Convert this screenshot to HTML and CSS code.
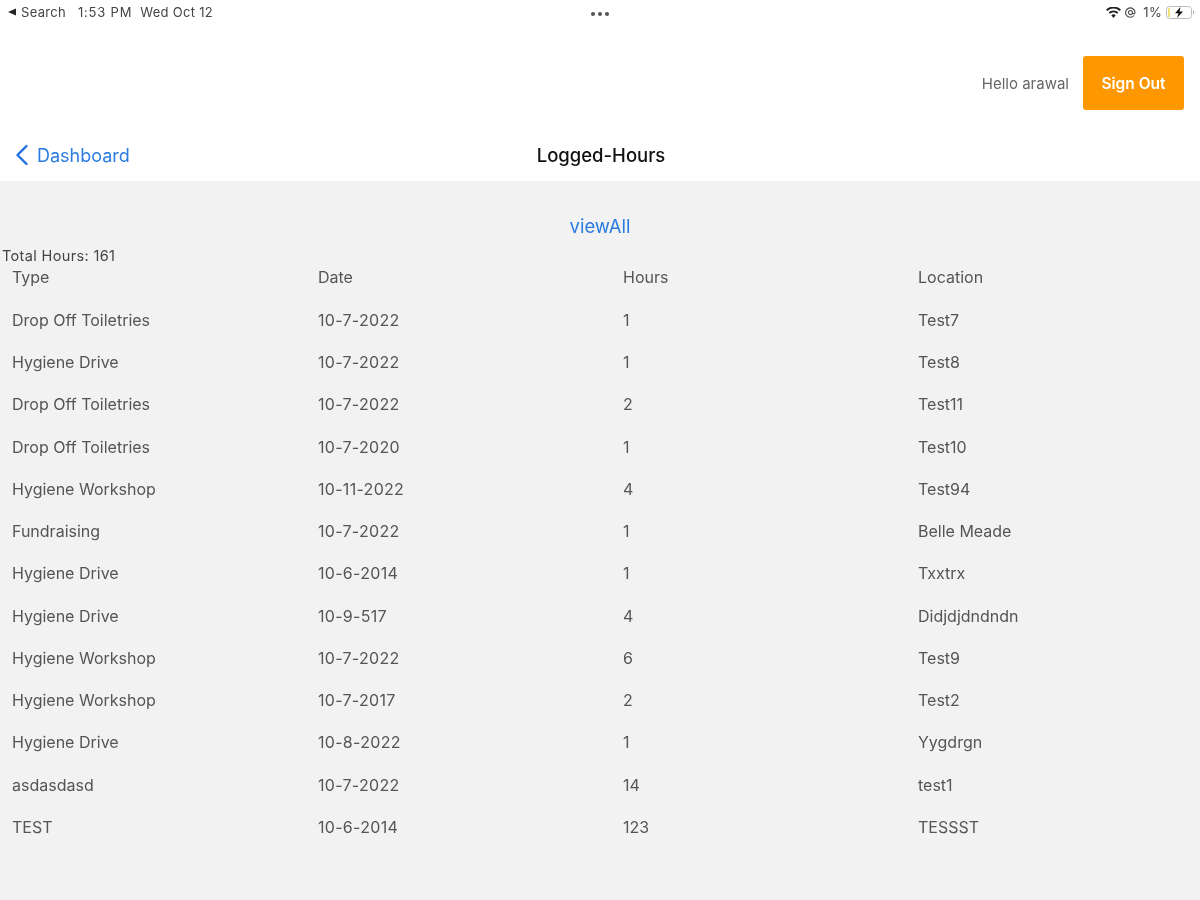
FILE: index.html
```html
<!DOCTYPE html>
<html lang="en">
<head>
<meta charset="utf-8">
<title>Logged-Hours</title>
<link rel="stylesheet" href="styles.css">
</head>
<body>
<div class="status-bar">
  <div class="status-left">
    <span class="back-app"><svg class="back-tri" width="8" height="8" viewBox="0 0 8 8"><path d="M0 4 8 0.5V7.5Z"/></svg>Search</span>
    <span class="clock">1:53 PM</span>
    <span class="date">Wed Oct 12</span>
  </div>
  <div class="dots"><i></i><i></i><i></i></div>
  <div class="status-right">
    <svg class="wifi" width="15" height="11" viewBox="0 0 15 11"><path d="M7.5 11 5.3 8.2a3.4 3.4 0 0 1 4.4 0ZM3.9 6.7l-1.300-1.500a7.600 7.600 0 0 1 9.800 0l-1.300 1.500a5.600 5.600 0 0 0-7.200 0ZM1.400 3.900 0 2.400a11.300 11.300 0 0 1 15 0l-1.400 1.500a9.200 9.200 0 0 0-12.200 0Z"/></svg>
    <svg width="11" height="11" viewBox="0 0 11 11" fill="none" stroke="#444" stroke-width="1.100"><path d="M9 8.500A4.700 4.700 0 1 1 10 5.500C10 7.500 7.500 7.500 7.500 5.500A2 2 0 1 0 7.500 5.600"/></svg>
    <span class="pct">1%</span>
    <svg width="30" height="13" viewBox="0 0 30 13"><rect x="0.500" y="0.500" width="25" height="12" rx="3" fill="none" stroke="#bbb"/><rect x="2" y="2" width="2" height="9" fill="#f3e27a"/><path d="M27 4.500c1.500.3 1.500 3.700 0 4Z" fill="#aaa"/><path d="M14.500 1 9 7.300h3.500L11 12l6-6.500h-3.500Z" fill="#111"/></svg>
  </div>
</div>

<header class="account-row">
  <span class="hello">Hello arawal</span>
  <button class="sign-out">Sign Out</button>
</header>

<nav class="nav-row">
  <a class="back-link">
    <svg width="14" height="22" viewBox="0 0 14 22" fill="none" stroke="#1f6fe0" stroke-width="2.400" stroke-linecap="round" stroke-linejoin="round"><path d="M11.500 2 2.500 11l9 9"/></svg>
    Dashboard
  </a>
  <h1 class="title">Logged-Hours</h1>
</nav>

<main class="content">
  <a class="view-all">viewAll</a>
  <div class="total">Total Hours: 161</div>
  <div class="table-head">
    <span>Type</span><span>Date</span><span>Hours</span><span>Location</span>
  </div>
  <div class="table-row"><span>Drop Off Toiletries</span><span>10-7-2022</span><span>1</span><span>Test7</span></div>
  <div class="table-row"><span>Hygiene Drive</span><span>10-7-2022</span><span>1</span><span>Test8</span></div>
  <div class="table-row"><span>Drop Off Toiletries</span><span>10-7-2022</span><span>2</span><span>Test11</span></div>
  <div class="table-row"><span>Drop Off Toiletries</span><span>10-7-2020</span><span>1</span><span>Test10</span></div>
  <div class="table-row"><span>Hygiene Workshop</span><span>10-11-2022</span><span>4</span><span>Test94</span></div>
  <div class="table-row"><span>Fundraising</span><span>10-7-2022</span><span>1</span><span>Belle Meade</span></div>
  <div class="table-row"><span>Hygiene Drive</span><span>10-6-2014</span><span>1</span><span>Txxtrx</span></div>
  <div class="table-row"><span>Hygiene Drive</span><span>10-9-517</span><span>4</span><span>Didjdjdndndn</span></div>
  <div class="table-row"><span>Hygiene Workshop</span><span>10-7-2022</span><span>6</span><span>Test9</span></div>
  <div class="table-row"><span>Hygiene Workshop</span><span>10-7-2017</span><span>2</span><span>Test2</span></div>
  <div class="table-row"><span>Hygiene Drive</span><span>10-8-2022</span><span>1</span><span>Yygdrgn</span></div>
  <div class="table-row"><span>asdasdasd</span><span>10-7-2022</span><span>14</span><span>test1</span></div>
  <div class="table-row"><span>TEST</span><span>10-6-2014</span><span>123</span><span>TESSST</span></div>
</main>
</body>
</html>
```
FILE: styles.css
```css
* { box-sizing: border-box; }
html, body { height: 100%; }
body {
  margin: 0;
  height: 900px;
  overflow: hidden;
  display: flex;
  flex-direction: column;
  background: #fff;
  color: #444;
  font-family: Inter, "Liberation Sans", sans-serif;
  font-size: 15px;
}
body > * { filter: blur(0.45px); }
.status-bar {
  height: 28px;
  padding: 0 4px 4px 4px;
  display: grid;
  grid-template-columns: 1fr auto 1fr;
  align-items: center;
  font-size: 13px;
  letter-spacing: 0.3px;
  color: #444;
}
.status-left { display: flex; padding-left: 4px; }
.back-app { display: flex; align-items: center; gap: 5px; }
.clock { margin-left: 12px; letter-spacing: 0.8px; }
.date { margin-left: 8px; }
.back-tri { fill: #222; }
.dots { display: flex; gap: 3px; padding-top: 4px; }
.dots i { width: 4px; height: 4px; border-radius: 50%; background: #555; }
.status-right { display: flex; justify-content: flex-end; align-items: center; gap: 4px; }
.wifi { fill: #222; }
.pct { margin-left: 3px; }
.account-row {
  height: 100px;
  padding: 28px 16px 18px 0;
  display: flex;
  justify-content: flex-end;
  align-items: center;
  gap: 14px;
}
.hello { font-size: 15px; color: #666; }
.sign-out {
  width: 101px;
  height: 54px;
  border: 0;
  border-radius: 3px;
  background: #ff9800;
  color: #fff;
  font: 600 15.500px Inter, "Liberation Sans", sans-serif;
}
.nav-row {
  height: 53px;
  position: relative;
  display: flex;
  align-items: center;
  justify-content: center;
  padding-left: 2px;
}
.back-link {
  position: absolute;
  left: 15px;
  top: 16px;
  display: flex;
  align-items: center;
  gap: 8px;
  color: #2b7be0;
  font-size: 18px;
}
.title { margin: 0; font-size: 18.500px; font-weight: 500; color: #111; }
.content {
  flex: 1;
  background: #f2f2f2;
  display: flex;
  flex-direction: column;
  padding-top: 33px;
}
.view-all { align-self: center; line-height: 24px; color: #2b7be0; font-size: 18.500px; }
.total { margin-top: 10px; height: 15px; line-height: 15px; padding-left: 2px; font-size: 14.500px; letter-spacing: 0.35px; color: #444; }
.table-head, .table-row {
  display: grid;
  grid-template-columns: 306px 305px 295px 1fr;
  padding-left: 12px;
  align-items: center;
  font-size: 16px;
  color: #555;
}
.table-head { height: 28.800px; }
.table-row { height: 42.250px; padding-top: 14px; }
.table-row span:nth-child(2) { letter-spacing: 0.3px; }
```
